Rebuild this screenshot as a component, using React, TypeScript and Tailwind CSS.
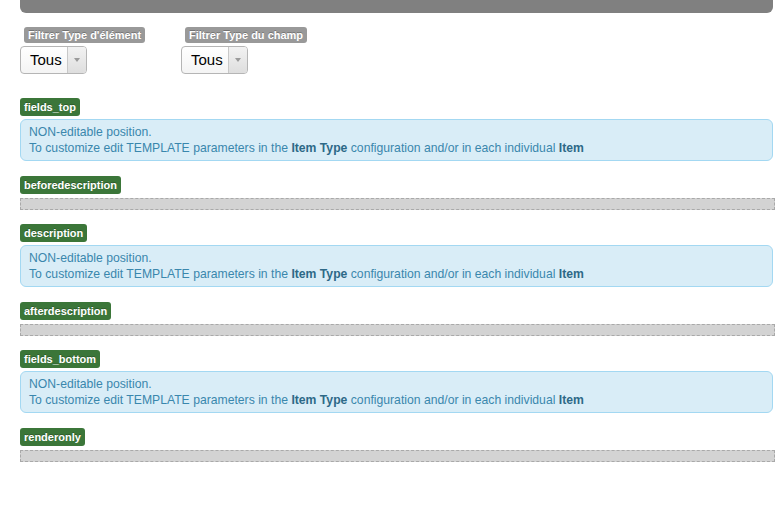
import React from "react";

const FONT = { fontFamily: '"Liberation Sans", Arial, sans-serif' };

function GrayLabel({ children }: { children: React.ReactNode }) {
  return (
    <span className="ml-[4px] inline-flex h-[16px] items-center self-start rounded-[3px] bg-[#999999] px-[4px] text-[11px] font-bold leading-[14px] text-white [text-shadow:0_-1px_0_rgba(0,0,0,0.25)]">
      {children}
    </span>
  );
}

function Select() {
  return (
    <div className="mt-[3px] flex h-[28px] w-[67px] overflow-hidden rounded-[4px] border border-[#b5b5b5] bg-gradient-to-b from-white to-[#f4f4f4]">
      <div className="flex flex-1 items-center pl-[9px] text-[15px] text-black">Tous</div>
      <div className="flex w-[19px] items-center justify-center border-l border-[#c8c8c8] bg-gradient-to-b from-[#f2f2f2] to-[#dedede]">
        <svg width="6" height="4" viewBox="0 0 6 4">
          <path d="M0 0 L6 0 L3 4 Z" fill="#9a9a9a" />
        </svg>
      </div>
    </div>
  );
}

function GreenLabel({ children }: { children: React.ReactNode }) {
  return (
    <span className="inline-flex h-[18px] items-center self-start rounded-[3px] bg-[#3b7639] px-[4px] text-[11px] font-bold leading-[14px] text-white [text-shadow:0_-1px_0_rgba(0,0,0,0.25)]">
      {children}
    </span>
  );
}

function InfoBox() {
  return (
    <div className="mt-[3px] rounded-[6px] border border-[#a3d8f2] bg-[#d9edf7] px-[8px] py-[4px] text-[12.2px] leading-[16px] text-[#3a87ad]">
      <div>NON-editable position.</div>
      <div>
        To customize edit TEMPLATE parameters in the{" "}
        <b className="text-[#2d6987]">Item Type</b> configuration and/or in each individual{" "}
        <b className="text-[#2d6987]">Item</b>
      </div>
    </div>
  );
}

function Dashed() {
  return <div className="mt-[4px] h-[12px] w-[755px] border border-dashed border-[#a9a9a9] bg-[#d3d3d3]" />;
}

const sections: { name: string; info: boolean }[] = [
  { name: "fields_top", info: true },
  { name: "beforedescription", info: false },
  { name: "description", info: true },
  { name: "afterdescription", info: false },
  { name: "fields_bottom", info: true },
  { name: "renderonly", info: false },
];

export default function App() {
  return (
    <div className="min-h-[508px] w-[780px] bg-white" style={FONT}>
      <div className="ml-[20px] w-[753px]">
        <div className="h-[13px] rounded-b-[6px] bg-[#808080]" />
        <div className="mt-[14px] flex">
          <div className="flex w-[161px] flex-col">
            <GrayLabel>Filtrer Type d'élément</GrayLabel>
            <Select />
          </div>
          <div className="flex flex-col">
            <GrayLabel>Filtrer Type du champ</GrayLabel>
            <Select />
          </div>
        </div>
        <div className="mt-[24px] flex flex-col">
          {sections.map((s) => (
            <div key={s.name} className={s.info ? "mb-[15px] flex flex-col" : "mb-[14px] flex flex-col"}>
              <GreenLabel>{s.name}</GreenLabel>
              {s.info ? <InfoBox /> : <Dashed />}
            </div>
          ))}
        </div>
      </div>
    </div>
  );
}
